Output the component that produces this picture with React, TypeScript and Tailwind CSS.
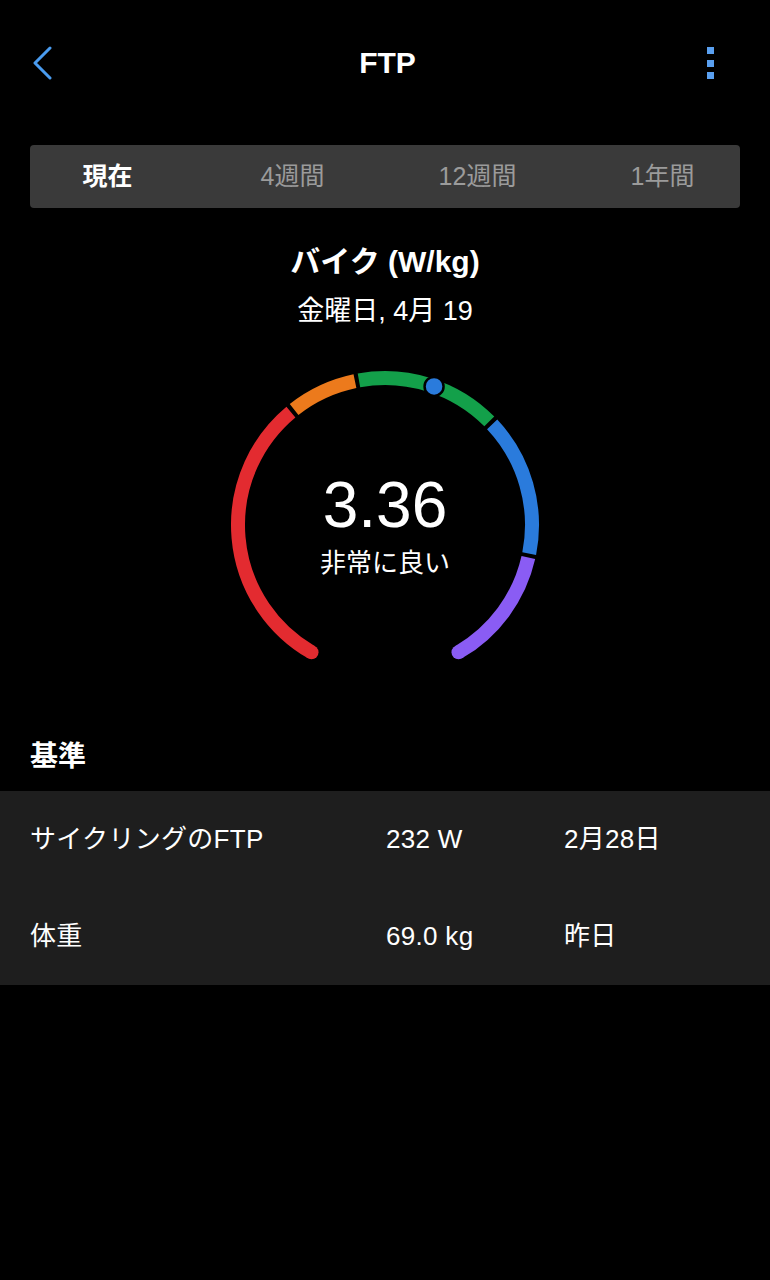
import React from 'react';

const tabs = [
  { label: '現在', active: true },
  { label: '4週間', active: false },
  { label: '12週間', active: false },
  { label: '1年間', active: false }
];

const rows = [
  { name: 'サイクリングのFTP', value: '232 W', date: '2月28日' },
  { name: '体重', value: '69.0 kg', date: '昨日' }
];

// gauge segments, degrees clockwise from +x axis (screen coords)
const segments = [
  { from: 120, to: 231, color: '#e32b30' },
  { from: 231, to: 259, color: '#ec7a1c' },
  { from: 259, to: 316, color: '#13a04a' },
  { from: 316, to: 372, color: '#2a7bdc' },
  { from: 372, to: 420, color: '#8a5cf4' }
];

const CX = 160;
const CY = 155;
const R = 147;

function pt(deg: number, r = R) {
  const a = (deg * Math.PI) / 180;
  return [CX + r * Math.cos(a), CY + r * Math.sin(a)];
}

function arc(from: number, to: number) {
  const [x1, y1] = pt(from);
  const [x2, y2] = pt(to);
  const large = to - from > 180 ? 1 : 0;
  return `M ${x1} ${y1} A ${R} ${R} 0 ${large} 1 ${x2} ${y2}`;
}

function Gauge() {
  const gap = 0.8;
  const [sx, sy] = pt(120);
  const [ex, ey] = pt(420);
  const [mx, my] = pt(289.5);
  return (
    <div className="relative w-[320px] h-[300px] mx-auto mt-[42px]">
      <svg width="320" height="300" viewBox="0 0 320 300">
        {segments.map((s, i) => (
          <path
            key={i}
            d={arc(s.from + (i === 0 ? 0 : gap), s.to - (i === segments.length - 1 ? 0 : gap))}
            stroke={s.color}
            strokeWidth="14"
            fill="none"
          />
        ))}
        <circle cx={sx} cy={sy} r="7" fill="#e32b30" />
        <circle cx={ex} cy={ey} r="7" fill="#8a5cf4" />
        <circle cx={mx} cy={my} r="9.5" fill="#2a7bdc" stroke="#000" strokeWidth="2.5" />
      </svg>
      <div className="absolute inset-0 flex flex-col items-center pt-[102px]">
        <div className="text-[64px] leading-[66px] font-light text-white">3.36</div>
        <div className="mt-[8px] text-[26px] leading-[34px] text-white">非常に良い</div>
      </div>
    </div>
  );
}

export default function App() {
  return (
    <div className="min-h-[1280px] pt-[31px] bg-black text-white font-['Liberation_Sans','Noto_Sans_CJK_JP',sans-serif]">
      <div className="grid grid-cols-[1fr_auto_1fr] items-center h-[64px] px-[33px]">
        <svg width="20" height="34" viewBox="0 0 20 34" className="-mt-[1px]">
          <path d="M17 2 L2 17 L17 32" stroke="#4a9cf0" strokeWidth="3" fill="none" strokeLinecap="round" strokeLinejoin="round" />
        </svg>
        <h1 className="text-[30px] font-bold leading-none ml-[5px]">FTP</h1>
        <div className="flex flex-col gap-[5.5px] justify-self-end mr-[23px]">
          <span className="block w-[7px] h-[7px] bg-[#5aa0f0]"></span>
          <span className="block w-[7px] h-[7px] bg-[#5aa0f0]"></span>
          <span className="block w-[7px] h-[7px] bg-[#5aa0f0]"></span>
        </div>
      </div>

      <div className="mx-[30px] mt-[50px] h-[63px] rounded-[4px] bg-[#3a3a3a] flex items-center justify-center">
        {tabs.map((t) => (
          <div
            key={t.label}
            className={`w-[185px] shrink-0 text-center text-[25px] ${t.active ? 'font-bold text-white' : 'text-[#9b9b9b]'}`}
          >
            {t.label}
          </div>
        ))}
      </div>

      <div className="mt-[36px] text-center text-[30px] font-bold leading-[36px]">バイク (W/kg)</div>
      <div className="mt-[14px] text-center text-[27px] leading-[34px]">金曜日, 4月 19</div>

      <Gauge />

      <h2 className="mt-[69px] px-[30px] text-[28px] font-bold leading-[36px]">基準</h2>

      <div className="mt-[16px] bg-[#1e1e1e]">
        {rows.map((r) => (
          <div key={r.name} className="h-[97px] flex items-center px-[30px] text-[26px] tracking-[0.3px]">
            <div className="w-[356px]">{r.name}</div>
            <div className="w-[178px]">{r.value}</div>
            <div>{r.date}</div>
          </div>
        ))}
      </div>
    </div>
  );
}
